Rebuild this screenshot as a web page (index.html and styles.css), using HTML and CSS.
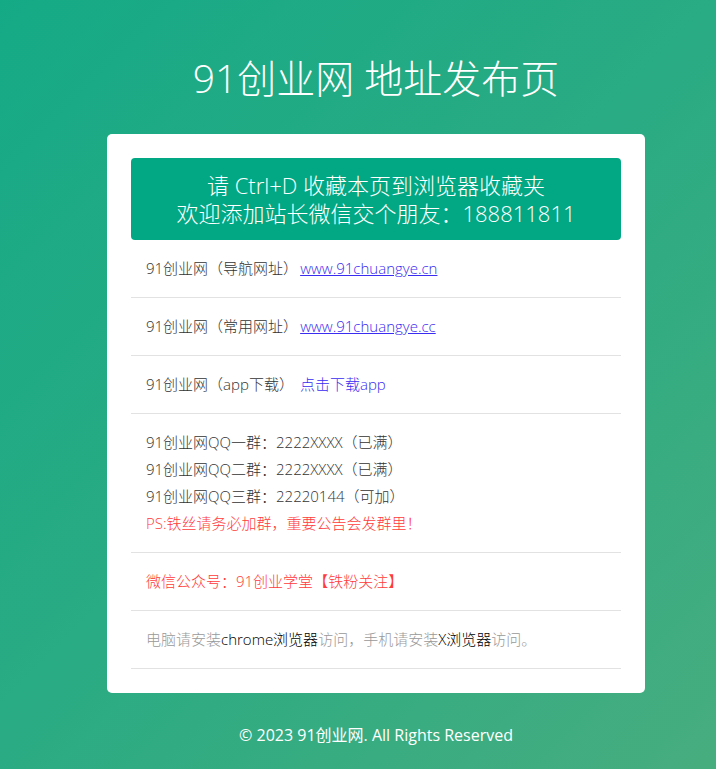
FILE: index.html
```html
<!DOCTYPE html>
<html lang="zh-CN">
<head>
<meta charset="utf-8">
<title>91创业网 地址发布页</title>
<link rel="stylesheet" href="styles.css">
</head>
<body>
<div class="wrap">
  <h1 class="title">91创业网 地址发布页</h1>
  <div class="card">
    <div class="banner">
      <div class="bline">请 Ctrl+D 收藏本页到浏览器收藏夹</div>
      <div class="bline">欢迎添加站长微信交个朋友：188811811</div>
    </div>
    <ul class="list">
      <li class="row">91创业网（导航网址）<a class="link" href="#">www.91chuangye.cn</a></li>
      <li class="row">91创业网（常用网址）<a class="link" href="#">www.91chuangye.cc</a></li>
      <li class="row">91创业网（app下载）<a class="link plain" href="#">点击下载app</a></li>
      <li class="row">
        <div>91创业网QQ一群：2222XXXX（已满）</div>
        <div>91创业网QQ二群：2222XXXX（已满）</div>
        <div>91创业网QQ三群：22220144（可加）</div>
        <div class="red">PS:铁丝请务必加群，重要公告会发群里！</div>
      </li>
      <li class="row red">微信公众号：91创业学堂【铁粉关注】</li>
      <li class="row grey">电脑请安装<span class="dark">chrome浏览器</span>访问，手机请安装<span class="dark">X浏览器</span>访问。</li>
    </ul>
  </div>
  <div class="footer">© 2023 91创业网. All Rights Reserved</div>
</div>
</body>
</html>
```

FILE: styles.css
```css
html, body {
  margin: 0;
  padding: 0;
}
body {
  min-height: 769px;
  background: linear-gradient(135deg, #15aa86 0%, #2aab83 50%, #47ad7f 100%);
  font-family: "Open Sans", "Noto Sans CJK SC", sans-serif;
  font-weight: 300;
  color: #333;
}
.wrap {
  width: 538px;
  margin-left: 107px;
  padding-top: 53px;
}
.title {
  margin: 0 0 31px;
  font-size: 39px;
  line-height: 50px;
  font-weight: 300;
  color: #fff;
  text-align: center;
  white-space: nowrap;
}
.card {
  background: #fff;
  border-radius: 5px;
  padding: 24px;
}
.banner {
  background: #02a884;
  border-radius: 4px;
  color: #fff;
  font-size: 22px;
  text-align: center;
  padding: 13px 0;
}
.bline {
  height: 28px;
  line-height: 28px;
  white-space: nowrap;
}
.list {
  list-style: none;
  margin: 0;
  padding: 0;
}
.row {
  padding: 15px;
  font-size: 15px;
  line-height: 27px;
  border-bottom: 1px solid #e2e2e2;
}
.link {
  color: #3a2cf0;
  margin-left: 2px;
}
.link.plain {
  text-decoration: none;
  margin-left: 6px;
}
.red {
  color: #ff3b3b;
}
.grey {
  color: #999;
}
.dark {
  color: #000;
}
.footer {
  margin-top: 30px;
  text-align: center;
  color: #fff;
  font-size: 16px;
  line-height: 24px;
  font-weight: 400;
}
```
